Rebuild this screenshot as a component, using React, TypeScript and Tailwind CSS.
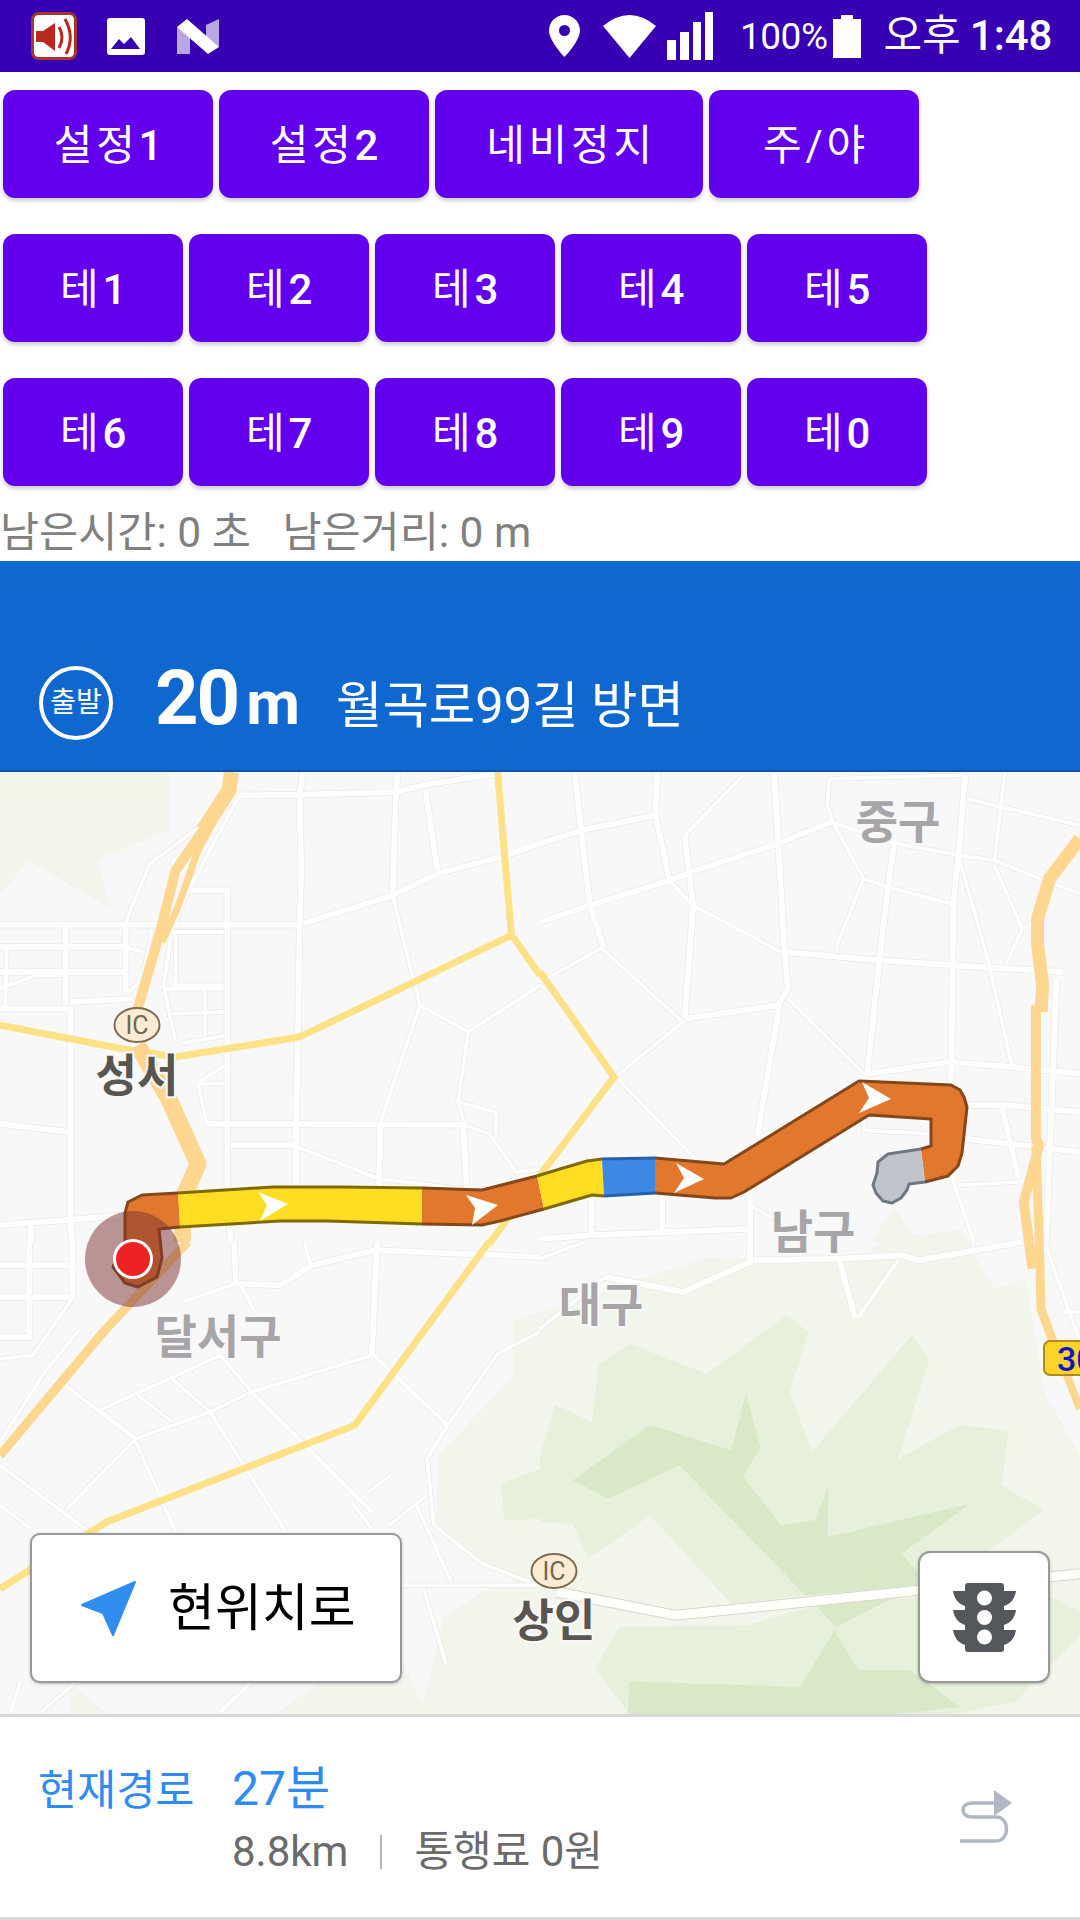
const SX = 2.904;
const OFFSET = [
  [0, 0],
  [540, 0],
  [0, 470],
  [540, 470],
];

// zoom-crop coordinates per map quadrant -> map pixels
const pts = (q: number, s: string) =>
  s
    .split(" ")
    .map((p) => {
      const [x, y] = p.split(",").map(Number);
      return `${(x / SX + OFFSET[q][0]).toFixed(1)},${(y / 3 + OFFSET[q][1]).toFixed(1)}`;
    })
    .join(" ");

const page = (s: string) =>
  s
    .split(" ")
    .map((p) => {
      const [x, y] = p.split(",").map(Number);
      return `${x},${y - 772}`;
    })
    .join(" ");

const WIDE: [number, string][] = [
  [0, "700,70 870,68 1150,60 1250,35 1445,5"],
  [0, "880,0 870,68 875,300 870,460 865,800 860,1050 860,1260"],
  [0, "1155,0 1150,60 1140,370"],
  [0, "1235,50 1270,295"],
  [0, "880,455 1140,370 1270,305 1470,250 1568,215"],
  [0, "0,458 660,458 870,458"],
  [0, "550,355 660,355 660,1250 670,1410"],
  [0, "190,460 190,700"],
  [0, "365,460 365,660"],
  [0, "0,525 365,525"],
  [0, "0,600 365,600"],
  [0, "0,710 205,710 205,1350 210,1410"],
  [0, "205,690 385,680"],
  [0, "600,1055 1345,1058 1355,1250"],
  [0, "1105,1058 1100,1250"],
  [0, "670,1120 860,1120"],
  [0, "0,1055 200,1080"],
  [0, "0,1360 365,1330"],
  [0, "90,1360 90,1410"],
  [1, "100,0 120,175 145,400 185,525"],
  [1, "0,215 120,175 335,130 340,0"],
  [1, "335,130 375,320"],
  [1, "0,450 145,400 375,325 440,300 690,215 845,150"],
  [1, "420,190 445,400 420,740"],
  [1, "680,5 710,540 720,650 690,700 420,740"],
  [1, "695,700 630,1100"],
  [1, "710,540 985,565 1200,580 1520,600"],
  [1, "1030,200 1010,350 985,570 950,905"],
  [1, "1235,10 1215,250 1200,400 1195,880 1190,960"],
  [1, "950,905 1190,870 1370,885 1568,905"],
  [1, "1230,1000 1360,1000 1568,1020"],
  [1, "1235,1100 1568,1140"],
  [1, "150,1275 150,1390"],
  [1, "355,1270 355,1380"],
  [1, "0,1400 150,1390 610,1370"],
  [1, "610,1270 610,1410"],
  [1, "1500,620 1470,1410"],
  [1, "1340,1000 1390,1220"],
  [2, "85,0 85,290"],
  [2, "0,70 220,70"],
  [2, "0,165 205,165"],
  [2, "0,285 90,285"],
  [2, "210,0 210,170"],
  [2, "680,0 685,125"],
  [2, "690,125 815,130 905,70 1090,25 1568,45"],
  [2, "1095,0 1080,340"],
  [3, "620,55 870,50 1050,40 1100,55 1400,0"],
  [3, "610,0 610,60 415,150 190,105"],
  [3, "870,55 915,230"],
];

const THIN: [number, string][] = [
  [0, "1140,370 1175,520 1220,700 1105,1050"],
  [0, "1220,700 1360,780 1568,640"],
  [0, "1360,780 1330,990 1350,1060 1420,1085 1500,1200 1568,1190"],
  [0, "1330,990 1440,1020 1440,1085"],
  [0, "365,450 435,275 600,150"],
  [0, "690,80 550,350 500,470 475,640 510,810"],
  [0, "500,480 650,480"],
  [0, "510,480 510,640 650,640"],
  [0, "480,650 650,650"],
  [0, "595,650 595,790"],
  [0, "500,725 650,720"],
  [0, "525,815 660,790"],
  [0, "580,930 660,875"],
  [0, "575,935 600,1055"],
  [0, "580,935 660,935"],
  [0, "865,1125 1100,1220 1340,1250"],
  [0, "440,470 415,620 375,660"],
  [0, "365,525 415,540"],
  [0, "0,650 105,610 180,610"],
  [0, "20,530 15,710"],
  [1, "185,525 0,630"],
  [1, "180,530 415,750 225,910"],
  [1, "225,920 460,1170"],
  [1, "420,190 590,10"],
  [1, "375,325 445,400 700,540"],
  [1, "720,680 945,910"],
  [1, "845,150 1015,210 1215,250 1320,265 1450,320 1568,365"],
  [1, "840,20 835,100 850,150 940,320 860,525"],
  [1, "940,320 1010,345 1195,395"],
  [1, "1215,250 1300,560 1370,880"],
  [1, "840,20 1235,10"],
  [1, "1240,80 1340,105 1568,160"],
  [1, "1350,0 1320,265"],
  [1, "1320,280 1400,470 1355,575"],
  [1, "1400,470 1480,420"],
  [1, "940,1050 940,1075 1130,1085"],
  [1, "1220,1240 1390,1230"],
  [1, "1195,1215 1260,1410"],
  [1, "610,1300 680,1340"],
  [2, "0,350 95,340 210,170"],
  [2, "0,600 130,390 230,265"],
  [2, "685,125 530,180"],
  [2, "885,0 900,70"],
  [2, "1080,340 730,450 610,510 395,590 190,805"],
  [2, "1085,340 1300,550 1240,650 1260,850 1400,965 1540,1020"],
  [2, "700,130 740,210"],
  [2, "640,340 290,505 395,590"],
  [2, "640,340 730,450 1080,810"],
  [2, "400,460 500,540"],
  [2, "500,410 610,510 830,870"],
  [2, "395,600 510,870"],
  [2, "190,430 390,590"],
  [2, "0,670 260,870"],
  [2, "0,790 90,860"],
  [2, "1300,550 1445,335 1568,270"],
  [2, "1240,760 1130,850"],
  [2, "1070,750 1135,700"],
  [2, "1020,780 1080,860"],
  [2, "1210,790 1310,1020"],
  [2, "1165,1030 1568,1030"],
  [2, "1230,1040 1295,1265"],
  [2, "730,1320 640,1410"],
  [2, "220,1320 120,1410"],
  [2, "60,1320 30,1410"],
  [3, "0,50 130,0"],
  [3, "190,105 0,260"],
  [3, "1040,55 925,225"],
  [3, "1465,0 1565,290"],
  [3, "1520,210 1568,210"],
];

const LIGHT: [number, string][] = [
  [0, "0,0 490,0 495,172 285,262 318,408 82,265 5,365 0,360"],
  [3, "0,210 490,45 860,60 950,30 990,0 1250,0 1260,40 1320,140 1410,110 1465,450 1568,640 1568,1416 0,1416"],
  [2, "1490,235 1568,210 1568,1416 1220,1416 1290,1120 1420,1040 1500,1015 1400,965 1265,850 1275,640 1490,400"],
  [2, "800,1416 930,1320 1150,1220 1240,1416"],
  [2, "200,1320 310,1416 200,1416"],
  [1, "960,1410 1030,1305 1080,1390 1220,1375 1250,1410"],
];

const MID: [number, string][] = [
  [2, "1455,725 1568,680 1568,830 1465,835"],
  [3, "0,840 0,640 45,490 150,540 170,370 260,305 485,395 715,220 780,270 725,450 790,630 1080,280 1130,355 1040,650 1220,548 1360,568 1340,730 1462,805 1310,920 1100,1040 770,1060 555,1085 320,820 140,950 95,845"],
  [3, "800,1090 1020,1070 1480,1060 1568,1110 1568,1180 1380,1380 1200,1416 260,1416 160,1280 230,1155 610,1148"],
];

const DARK: [number, string][] = [
  [3, "95,715 320,548 555,625 598,455 640,615 590,705 700,850 798,835 838,730 835,885 1248,785 1048,937 1110,1000 1110,1030 770,1060 405,670 198,770"],
  [3, "800,1090 1020,1070 860,1155"],
  [3, "260,1318 755,1335 855,1165 925,1285 1075,1285 1218,1395 1030,1416 255,1416"],
];

const ROUTE = [
  {
    fill: "#e1782e",
    stroke: "#84471a",
    edges: [
      "178,1193 142,1195 128,1202 125,1213 125,1240 113,1267 125,1283 138,1287 157,1277 162,1258 159,1229 180,1227",
    ],
  },
  {
    fill: "#fedd23",
    stroke: "#7f6a00",
    edges: ["178,1193 273,1187 340,1187 422,1188", "422,1224 327,1221 280,1221 180,1227"],
  },
  {
    fill: "#e1782e",
    stroke: "#84471a",
    edges: ["422,1188 482,1190 537,1176", "544,1209 500,1221 482,1225 422,1224"],
  },
  {
    fill: "#fedd23",
    stroke: "#7f6a00",
    edges: ["537,1176 560,1169 587,1161 602,1159", "604,1196 592,1195 544,1209"],
  },
  {
    fill: "#3f87e6",
    stroke: "#2560ad",
    edges: ["602,1159 655,1158", "655,1193 604,1196"],
  },
  {
    fill: "#e1782e",
    stroke: "#84471a",
    edges: [
      "655,1158 724,1164 859,1081 951,1085 960,1090 964,1097 967,1107 962,1153 958,1166 948,1176 925,1182",
      "921,1149 931,1146 931,1119 869,1115 744,1192 731,1198 715,1198 655,1193",
    ],
  },
  {
    fill: "#c0c4cb",
    stroke: "#6f7780",
    edges: ["925,1182 909,1184 907,1190 901,1198 892,1203 883,1201 876,1193 873,1185 877,1173 878,1162 888,1154 921,1149"],
  },
];

const CHEVRONS = [
  "258,1192 288,1204 260,1221 267,1205",
  "466,1195 498,1205 472,1225 475,1208",
  "676,1163 704,1179 674,1193 684,1178",
  "862,1082 891,1099 859,1113 869,1098",
];

function RoadMap() {
  return (
    <svg viewBox="0 0 1080 942" className="block h-full w-full">
      {LIGHT.map(([q, s], i) => (
        <polygon key={i} points={pts(q, s)} fill="#f2f5ec" />
      ))}
      {MID.map(([q, s], i) => (
        <polygon key={i} points={pts(q, s)} fill="#e6f0da" />
      ))}
      {DARK.map(([q, s], i) => (
        <polygon key={i} points={pts(q, s)} fill="#d9e9c7" />
      ))}

      {WIDE.map(([q, s], i) => (
        <polyline key={i} points={pts(q, s)} fill="none" stroke="#e3e3e3" strokeWidth="7" />
      ))}
      {THIN.map(([q, s], i) => (
        <polyline key={i} points={pts(q, s)} fill="none" stroke="#e3e3e3" strokeWidth="5" />
      ))}
      <polyline points={pts(3, "50,1050 395,1120 1100,1045 1568,995")} fill="none" stroke="#d4d8cc" strokeWidth="11" />
      {WIDE.map(([q, s], i) => (
        <polyline key={i} points={pts(q, s)} fill="none" stroke="#fefefc" strokeWidth="6" />
      ))}
      {THIN.map(([q, s], i) => (
        <polyline key={i} points={pts(q, s)} fill="none" stroke="#fefefc" strokeWidth="4" />
      ))}
      <polyline points={pts(3, "50,1050 395,1120 1100,1045 1568,995")} fill="none" stroke="#fefefa" strokeWidth="9" />

      {/* main roads */}
      <g fill="none" stroke="#fce186" strokeWidth="7">
        <polyline points={pts(0, "0,760 355,830 510,855 870,795 1485,490 1445,0")} />
        <polyline points={pts(0, "1490,495 1568,610")} />
        <polyline points={pts(1, "0,600 215,915 0,1210")} />
        <polyline points="540,403 489,472" />
        <polyline points={pts(2, "1420,0 1030,550 310,840 0,1040")} />
      </g>
      <g fill="none" stroke="#fdd78f" strokeLinejoin="round">
        <polyline points={pts(0, "672,0 665,55 590,175")} strokeWidth="15" />
        <polyline points={pts(0, "640,100 510,295 465,480 400,710")} strokeWidth="10" />
        <polyline points={pts(0, "640,110 575,235 515,410 470,510")} strokeWidth="7" />
        <polyline points={pts(0, "400,820 490,980 575,1175 555,1225 530,1280 530,1410")} strokeWidth="17" />
        <polyline points={pts(2, "545,0 300,270 0,640")} strokeWidth="9" />
        <polyline points={pts(1, "1568,200 1480,320 1445,440 1445,520 1460,640 1455,720")} strokeWidth="13" />
        <polyline points={pts(1, "1440,700 1440,1100 1450,1120 1405,1290 1420,1410")} strokeWidth="10" />
        <polyline points={pts(1, "1440,1120 1450,1410")} strokeWidth="9" />
        <polyline points={pts(3, "1420,0 1430,80")} strokeWidth="10" />
        <polyline points={pts(3, "1450,0 1455,200 1490,300")} strokeWidth="9" />
        <polyline points={pts(3, "1530,400 1568,500")} strokeWidth="8" />
      </g>

      <g
        fontWeight="700"
        fontSize="45"
        fill="#5a554f"
        stroke="#f8f8f9"
        strokeWidth="4"
        textAnchor="middle"
        style={{ paintOrder: "stroke" }}
      >
        <text x="137" y="320">성서</text>
        <text x="554" y="865">상인</text>
      </g>
      <g
        fontWeight="700"
        fontSize="46"
        fill="#a8a5a8"
        stroke="#f8f8f9"
        strokeWidth="4"
        textAnchor="middle"
        style={{ paintOrder: "stroke" }}
      >
        <text x="218" y="581">달서구</text>
        <text x="601" y="549">대구</text>
        <text x="813" y="476">남구</text>
        <text x="898" y="66">중구</text>
      </g>

      {[
        [137, 253],
        [554, 799],
      ].map(([cx, cy]) => (
        <g key={cx}>
          <ellipse cx={cx} cy={cy} rx="22.5" ry="17" fill="#fbebd5" stroke="#7d6b50" strokeWidth="2" />
          <text x={cx} y={cy + 9} fontSize="25" fill="#6f6a4f" textAnchor="middle">IC</text>
        </g>
      ))}

      <rect x="1044" y="569" width="60" height="34" rx="6" fill="#fdd32b" stroke="#b08a20" strokeWidth="2" />
      <text x="1057" y="599" fontSize="34" fontWeight="500" fill="#0a14c8">30</text>

      {ROUTE.map((seg, i) => (
        <g key={i}>
          <polygon points={page(seg.edges.join(" "))} fill={seg.fill} />
          {seg.edges.map((e, j) => (
            <polyline key={j} points={page(e)} fill="none" stroke={seg.stroke} strokeWidth="3" strokeLinejoin="round" />
          ))}
        </g>
      ))}
      {CHEVRONS.map((c) => (
        <polygon key={c} points={page(c)} fill="#ffffff" />
      ))}

      <circle cx="133" cy="487" r="48" fill="#7c2f2f" fillOpacity="0.5" />
      <circle cx="133" cy="487" r="20" fill="#ffffff" />
      <circle cx="133" cy="487" r="17" fill="#ee2222" />
    </svg>
  );
}

function StatusBar() {
  return (
    <div className="flex h-[72px] items-center bg-[#3700b3] pl-[31px] text-white">
      <svg width="46" height="48" viewBox="0 0 46 48">
        <rect x="1.5" y="1.5" width="43" height="45" rx="6" fill="#ffffff" stroke="#a8352a" strokeWidth="3" />
        <path d="M5 19 H12 L24 11 V39 L12 30 H5 Z" fill="#b8281e" />
        <path d="M28 15 Q34 25 28 36" fill="none" stroke="#b8281e" strokeWidth="3" />
        <path d="M34 7 Q44 25 35 42" fill="none" stroke="#b8281e" strokeWidth="3" />
      </svg>
      <svg className="ml-[30px]" width="38" height="37" viewBox="0 0 38 37">
        <rect width="38" height="37" rx="3" fill="#ffffff" />
        <path d="M4 31 L12 21 L17 26 L24 19 L33 31 Z" fill="#3700b3" />
      </svg>
      <svg className="ml-[32px]" width="42" height="35" viewBox="0 0 42 35">
        <path d="M0 8 L13 14 V35 L0 35 Z M42 0 V28 L29 22 V6 Z" fill="#ffffff" fillOpacity="0.65" />
        <path d="M0 8 L10 0 L42 28 L31 35 Z" fill="#ffffff" />
      </svg>

      <svg className="ml-[330px]" width="31" height="42" viewBox="0 0 31 42">
        <path
          fillRule="evenodd"
          d="M15.5 0 C7 0 0 7 0 15.5 C0 26 15.5 42 15.5 42 S31 26 31 15.5 C31 7 24 0 15.5 0Z M15.5 10a5.5 5.5 0 1 0 0 11 5.5 5.5 0 0 0 0-11Z"
          fill="#ffffff"
        />
      </svg>
      <svg className="ml-[23px]" width="53" height="43" viewBox="0 0 53 43">
        <path d="M0 11 Q26.5 -11 53 11 L26.5 43 Z" fill="#ffffff" />
      </svg>
      <svg className="ml-[11px]" width="46" height="48" viewBox="0 0 46 48">
        <rect x="0" y="28" width="9" height="20" fill="#ffffff" />
        <rect x="13" y="20" width="9" height="28" fill="#ffffff" />
        <rect x="26" y="10" width="8" height="38" fill="#ffffff" />
        <rect x="38" y="0" width="8" height="48" fill="#ffffff" />
      </svg>
      <span className="ml-[27px] text-[37px] leading-none tracking-[-0.5px]">100%</span>
      <svg className="ml-[6px]" width="28" height="43" viewBox="0 0 28 43">
        <path d="M8 0 H20 V4 H28 V43 H0 V4 H8 Z" fill="#ffffff" />
      </svg>
      <span className="ml-[22px] text-[42px] leading-none">오후</span>
      <span className="ml-[9px] text-[42px] leading-none font-medium">1:48</span>
    </div>
  );
}

function Btn({ label, num, width }: { label: string; num?: string; width: string }) {
  return (
    <button
      className={`${width} h-[108px] rounded-[12px] bg-[#6200ee] pt-[4px] pl-[4px] text-[42px] leading-none tracking-[0.0892em] text-white shadow-[0_3px_4px_rgba(0,0,0,0.2)]`}
    >
      {label}
      {num && <span className="font-medium">{num}</span>}
    </button>
  );
}

export default function App() {
  return (
    <div className="h-[1920px] w-[1080px] overflow-hidden bg-white font-[Roboto,'Noto_Sans_CJK_KR',sans-serif]">
      <StatusBar />

      <div className="flex flex-col gap-[36px] px-[3px] pt-[18px]">
        <div className="flex gap-[6px]">
          <Btn label="설정" num="1" width="w-[210px]" />
          <Btn label="설정" num="2" width="w-[210px]" />
          <Btn label="네비정지" width="w-[268px]" />
          <Btn label="주/야" width="w-[210px]" />
        </div>
        <div className="flex gap-[6px]">
          {["1", "2", "3", "4", "5"].map((n) => (
            <Btn key={n} label="테" num={n} width="w-[180px]" />
          ))}
        </div>
        <div className="flex gap-[6px]">
          {["6", "7", "8", "9", "0"].map((n) => (
            <Btn key={n} label="테" num={n} width="w-[180px]" />
          ))}
        </div>
      </div>

      <div className="flex h-[75px] items-center whitespace-pre pt-[20px] text-[42.5px] leading-none text-[#808080]">
        남은시간: 0 초   남은거리: 0 m
      </div>

      <div className="flex h-[211px] items-end border-b-2 border-[#0b55ad] bg-[#0f67d0] pb-[30px] pl-[39px] text-white">
        <div className="flex h-[74px] w-[74px] items-center justify-center rounded-full border-4 border-white text-[28px] leading-none">
          출발
        </div>
        <div className="ml-[42px] flex items-baseline">
          <span className="text-[76px] leading-[74px] font-bold tracking-[-2px]">20</span>
          <span className="ml-[8px] text-[62px] leading-[74px] font-bold">m</span>
        </div>
        <span className="mb-[2px] ml-[36px] text-[50.5px] leading-[64px]">월곡로99길 방면</span>
      </div>

      <div className="relative h-[942px] overflow-hidden bg-[#f8f8f9]">
        <RoadMap />
        <button className="absolute bottom-[31px] left-[30px] flex h-[150px] w-[372px] items-center rounded-[10px] border-2 border-[#999999] bg-white pl-[49px] shadow-[0_1px_3px_rgba(0,0,0,0.25)]">
          <svg width="55" height="55" viewBox="0 0 55 55">
            <path d="M1 24 L54 1 L32 54 L22 32 Z" fill="#318cf0" stroke="#318cf0" strokeWidth="2" strokeLinejoin="round" />
          </svg>
          <span className="ml-[32px] text-[51px] leading-none text-black">현위치로</span>
        </button>
        <button className="absolute right-[30px] bottom-[31px] flex h-[132px] w-[132px] items-center justify-center rounded-[12px] border-2 border-[#999999] bg-white shadow-[0_1px_3px_rgba(0,0,0,0.25)]">
          <svg width="63" height="69" viewBox="0 0 63 69">
            <rect x="12" y="0" width="39" height="69" rx="3" fill="#54575c" />
            {[8, 27, 47].map((y) => (
              <path
                key={y}
                d={`M0 ${y} H12 V${y + 15} C5 ${y + 13} 1 ${y + 7} 0 ${y} Z M63 ${y} H51 V${y + 15} C58 ${y + 13} 62 ${y + 7} 63 ${y} Z`}
                fill="#54575c"
              />
            ))}
            {[15, 34.5, 54].map((cy) => (
              <circle key={cy} cx="31.5" cy={cy} r="7.5" fill="#ffffff" />
            ))}
          </svg>
        </button>
      </div>

      <div className="flex h-[206px] items-center justify-between border-t-[3px] border-b-[3px] border-[#d8d8d8] pr-[68px] pl-[38px]">
        <div className="flex flex-col gap-[17px] pt-[6px]">
          <div className="flex items-baseline text-[#2e8bf0]">
            <span className="w-[194px] text-[42.5px] leading-[44px]">현재경로</span>
            <span className="text-[48px] leading-[44px]">27분</span>
          </div>
          <div className="ml-[194px] flex items-center text-[42px] leading-[44px] text-[#6b6b6b]">
            <span>8.8km</span>
            <span className="mx-[32px] h-[34px] w-[2px] bg-[#b5b5b5]" />
            <span>통행료 0원</span>
          </div>
        </div>
        <svg width="56" height="54" viewBox="0 0 56 54">
          <path d="M38 0 L56 13 L38 26 Z" fill="#b0b8c4" />
          <path
            d="M40 13 H16 C4 13 4 27 16 27 H40 C54 27 54 51 40 51 H4"
            fill="none"
            stroke="#b0b8c4"
            strokeWidth="3.5"
          />
        </svg>
      </div>
    </div>
  );
}
